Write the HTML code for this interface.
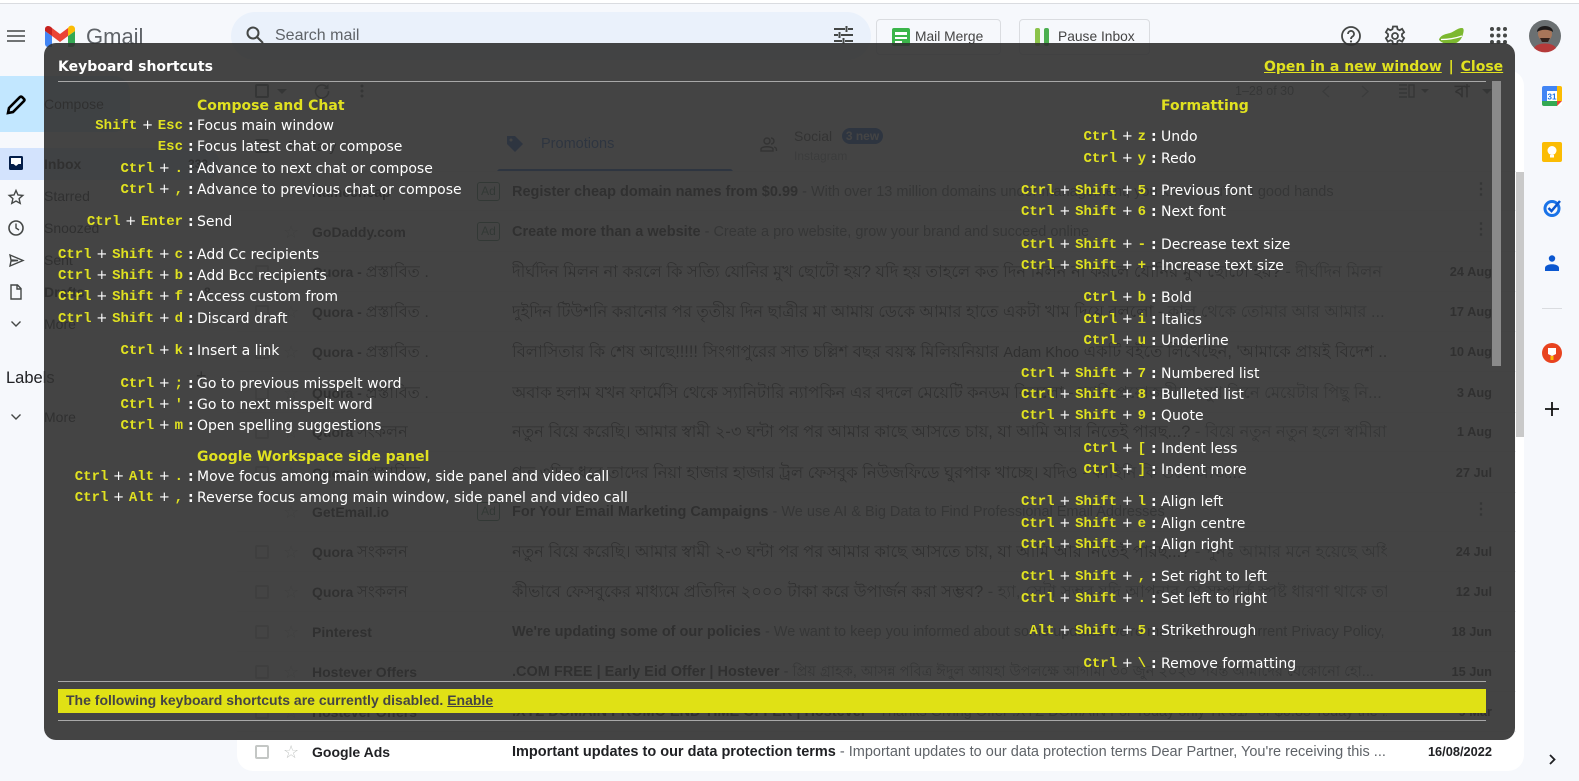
<!DOCTYPE html>
<html><head><meta charset="utf-8"><title>Gmail</title>
<style>
*{box-sizing:border-box}
html,body{margin:0;padding:0;width:1579px;height:781px;overflow:hidden;background:#f6f8fc;font-family:"Liberation Sans",sans-serif;color:#202124}
.a{position:absolute;white-space:nowrap}
svg{position:absolute;overflow:visible}
.side{font-size:14px;left:44px;line-height:20px;color:#202124}
.row{position:absolute;left:237px;width:1279px;height:40px;font-size:14px;line-height:40px;border-bottom:1px solid #eceff1;white-space:nowrap}
.row>*{position:absolute;top:0}
.cb{left:18px;top:13px!important;width:14px;height:14px;border:2px solid #c4c7c5;border-radius:2px}
.st{left:46px;top:10px!important;font-size:18px;line-height:20px;color:#c4c7c5}
.sn{left:75px;font-weight:bold;width:160px;overflow:hidden}
.q{font-size:16.200px;font-style:normal;font-weight:normal}
.ad{left:240px;top:10px!important;width:23px;height:19px;line-height:17px;border:1px solid #3c7a5c;border-radius:3px;font-size:12px;text-align:center;color:#3c7a5c}
.sb{left:275px;width:875px;overflow:hidden;color:#5f6368;font-size:14.500px}
.sb b{color:#202124}
.bn{font-size:16.400px}
.bn b{font-weight:normal}
.dt{right:24px;font-size:12.800px;font-weight:bold}
.ds{right:27px;font-weight:bold;color:#5f6368;font-size:16px;letter-spacing:0;line-height:36px}
#ov{position:absolute;left:44px;top:43px;width:1471px;height:697px;background:rgba(50,50,50,.91);border-radius:12px}
.r{position:absolute;left:0;height:20px;width:1500px;margin-top:1px;line-height:20px;font-family:"DejaVu Sans",sans-serif;font-size:14px;color:#fff;white-space:nowrap}
.k{position:absolute;left:0;text-align:right;font-family:"Liberation Mono",monospace;font-weight:bold;font-size:14px;color:#e0e120}
.k em{display:inline-block;width:20.500px;text-align:center;font-style:normal;font-family:"DejaVu Sans",sans-serif;font-weight:normal;font-size:13.300px;color:#fff}
.l .k{width:183px}.l .c{left:188px}.l .d{left:197px}
.m .k{width:1146px}.m .c{left:1151px}.m .d{left:1161px}
.c{position:absolute;font-weight:bold;color:#fff}
.d{position:absolute}
.h{position:absolute;margin-top:1px;color:#e0e120;font:bold 14px/20px "DejaVu Sans",sans-serif;white-space:nowrap}
.ln{position:absolute;height:1px;background:#a8a8a8}
</style></head><body>
<div class="a" style="left:0;top:0;width:1579px;height:4px;background:#fff;border-bottom:1px solid #dadce0"></div>

<!-- top bar -->
<svg style="left:7px;top:30px" width="18" height="12"><path d="M0 1h18M0 6h18M0 11h18" stroke="#444746" stroke-width="1.600"/></svg>
<svg style="left:45px;top:25px" width="30" height="22" viewBox="0 0 30 22"><path d="M0 6v13a3 3 0 0 0 3 3h4V11z" fill="#4285f4"/><path d="M23 22h4a3 3 0 0 0 3-3V6l-7 5z" fill="#34a853"/><path d="M23 3v8l7-5V4c0-3-3.500-4.500-6-2.500z" fill="#fbbc04"/><path d="M7 11V3l8 6 8-6v8l-8 6z" fill="#ea4335"/><path d="M0 4v2l7 5V3L6 2C3.500 0 0 1 0 4z" fill="#c5221f"/></svg>
<div class="a" style="left:86px;top:23px;font-size:22px;line-height:28px;color:#5f6368">Gmail</div>
<div class="a" style="left:231px;top:12px;width:640px;height:48px;border-radius:24px;background:#eaf1fb"></div>
<svg style="left:245px;top:25px" width="20" height="20" viewBox="0 0 20 20"><circle cx="8" cy="8" r="5.500" fill="none" stroke="#444746" stroke-width="2"/><path d="M12 12l6 6" stroke="#444746" stroke-width="2"/></svg>
<div class="a" style="left:275px;top:26px;font-size:16px;line-height:20px;color:#5f6368">Search mail</div>
<svg style="left:834px;top:26px" width="19" height="18"><path d="M0 3h11M14 3h5M0 9h4M7 9h12M0 15h8M11 15h8M12.500 0v6M5.500 6v6M9.500 12v6" stroke="#444746" stroke-width="2"/></svg>
<div class="a" style="left:876px;top:19px;width:125px;height:36px;border:1px solid #dadce0;border-radius:4px"></div>
<svg style="left:892px;top:28px" width="18" height="18"><rect width="18" height="18" rx="2" fill="#3bb54a"/><path d="M3 4h12v3H3zM3 9h12v2H3zM3 13h7v2H3z" fill="#fff"/></svg>
<div class="a" style="left:915px;top:28px;font-size:13.800px;line-height:18px;color:#444">Mail Merge</div>
<div class="a" style="left:1019px;top:19px;width:131px;height:36px;border:1px solid #dadce0;border-radius:4px"></div>
<svg style="left:1035px;top:28px" width="14" height="18"><rect width="5" height="18" rx="2" fill="#8bc34a"/><rect x="9" width="5" height="18" rx="2" fill="#4caf50"/></svg>
<div class="a" style="left:1058px;top:28px;font-size:13.800px;line-height:18px;color:#444">Pause Inbox</div>
<svg style="left:1341px;top:26px" width="20" height="20" viewBox="0 0 20 20"><circle cx="10" cy="10" r="9" fill="none" stroke="#444746" stroke-width="1.800"/><path d="M7 8a3 3 0 1 1 4.500 2.500c-1 .6-1.500 1.200-1.500 2.500" fill="none" stroke="#444746" stroke-width="1.800"/><circle cx="10" cy="15.500" r="1.100" fill="#444746"/></svg>
<svg style="left:1384px;top:25px" width="22" height="22" viewBox="0 0 22 22"><path d="M9 1.500h4l.6 2.800 2 .9 2.500-1.400 2 3.400-2.100 1.900v2.200l2.100 1.900-2 3.400-2.500-1.400-2 .9-.6 2.800H9l-.6-2.800-2-.9-2.500 1.400-2-3.400 2.100-1.900V9.100L1.900 7.200l2-3.400 2.500 1.400 2-.9z" fill="none" stroke="#444746" stroke-width="1.800"/><circle cx="11" cy="11" r="3" fill="none" stroke="#444746" stroke-width="1.800"/></svg>
<svg style="left:1439px;top:28px" width="25" height="18" viewBox="0 0 25 18"><path d="M0 12C1 7 7 6 11 5S18 0 23 0c2 0 2 3 1 6-1 5-5 10-11 10-6 1-10-1-13-4z" fill="#7cb82f"/><path d="M2 11.500c7 0 14-1 21-3.500" stroke="#fff" stroke-width="1.300" fill="none"/></svg>
<svg style="left:1490px;top:27px" width="17" height="17" fill="#444746"><circle cx="2" cy="2" r="2"/><circle cx="8.500" cy="2" r="2"/><circle cx="15" cy="2" r="2"/><circle cx="2" cy="8.500" r="2"/><circle cx="8.500" cy="8.500" r="2"/><circle cx="15" cy="8.500" r="2"/><circle cx="2" cy="15" r="2"/><circle cx="8.500" cy="15" r="2"/><circle cx="15" cy="15" r="2"/></svg>
<svg style="left:1529px;top:20px" width="32" height="32" viewBox="0 0 32 32"><circle cx="16" cy="16" r="16" fill="#6b7072"/><circle cx="16" cy="14" r="7" fill="#a8765a"/><path d="M8 12c0-8 16-8 16 0-4-3-12-3-16 0z" fill="#1d1a1a"/><path d="M11 18h10l-2 4h-6z" fill="#33221c"/><path d="M5 28c3-6 19-6 22 0a16 16 0 0 1-22 0z" fill="#b53a3a"/></svg>

<!-- sidebar -->
<div class="a" style="left:0;top:76px;width:130px;height:56px;background:#c2e7ff;border-radius:0 16px 16px 0"></div>
<svg style="left:6px;top:95px" width="20" height="20" viewBox="0 0 20 20"><path d="M2 18l1-5L14 2a1.500 1.500 0 0 1 2 0l2 2a1.500 1.500 0 0 1 0 2L7 17z" fill="none" stroke="#000" stroke-width="2.600"/></svg>
<div class="a side" style="top:94px">Compose</div>
<div class="a" style="left:0;top:148px;width:220px;height:32px;background:#d3e3fd;border-radius:0 16px 16px 0"></div>
<svg style="left:9px;top:156px" width="14" height="14"><rect width="14" height="14" rx="1.500" fill="#041e49"/><path d="M2 2h10v6H9.500L7 10 4.500 8H2z" fill="#fff"/></svg>
<div class="a side" style="top:154px;font-weight:bold">Inbox</div>
<div class="a side" style="left:188px;top:154px;font-size:12px;font-weight:bold">233</div>
<svg style="left:8px;top:189px" width="16" height="16" viewBox="0 0 16 16"><path d="M8 1.500l2 4.500 4.800.4-3.700 3.200 1.100 4.800L8 12l-4.200 2.400 1.100-4.800L1.200 6.400 6 6z" fill="none" stroke="#444746" stroke-width="1.400"/></svg>
<div class="a side" style="top:186px">Starred</div>
<svg style="left:8px;top:220px" width="16" height="16" viewBox="0 0 16 16"><circle cx="8" cy="8" r="7" fill="none" stroke="#444746" stroke-width="1.600"/><path d="M8 3.500V8l3 2" fill="none" stroke="#444746" stroke-width="1.400"/></svg>
<div class="a side" style="top:218px">Snoozed</div>
<svg style="left:9px;top:254px" width="15" height="13" viewBox="0 0 15 13"><path d="M1 1l13 5.500L1 12l1-5 7-.5-7-.5z" fill="none" stroke="#444746" stroke-width="1.400"/></svg>
<div class="a side" style="top:250px">Sent</div>
<svg style="left:10px;top:284px" width="12" height="16" viewBox="0 0 12 16"><path d="M1 1h6.500L11 4.500V15H1zM7 1v4h4" fill="none" stroke="#444746" stroke-width="1.400"/></svg>
<div class="a side" style="top:282px;font-weight:bold">Drafts</div>
<div class="a side" style="left:204px;top:282px;font-size:12px;font-weight:bold">8</div>
<svg style="left:11px;top:321px" width="10" height="6"><path d="M.5.500L5 5 9.500.500" fill="none" stroke="#444746" stroke-width="1.400"/></svg>
<div class="a side" style="top:314px">More</div>
<div class="a" style="left:6px;top:368px;font-size:16.500px;line-height:20px;color:#202124">Labels</div>
<div class="a side" style="left:196px;top:366px;font-size:18px">+</div>
<svg style="left:11px;top:414px" width="10" height="6"><path d="M.5.500L5 5 9.500.500" fill="none" stroke="#444746" stroke-width="1.400"/></svg>
<div class="a side" style="top:407px">More</div>

<!-- main panel -->
<div class="a" style="left:237px;top:70px;width:1287px;height:701px;background:#fff;border-radius:16px"></div>
<div class="a" style="left:255px;top:84px;width:14px;height:14px;border:2px solid #5f6368;border-radius:2px"></div>
<svg style="left:277px;top:89px" width="10" height="5"><path d="M0 0h10L5 5z" fill="#5f6368"/></svg>
<svg style="left:314px;top:83px" width="16" height="16" viewBox="0 0 16 16"><path d="M13.500 5A6.500 6.500 0 1 0 14.500 8" fill="none" stroke="#5f6368" stroke-width="1.600"/><path d="M14.500 1v5h-5z" fill="#5f6368"/></svg>
<svg style="left:360px;top:84px" width="4" height="14" fill="#5f6368"><circle cx="2" cy="2" r="1.500"/><circle cx="2" cy="7" r="1.500"/><circle cx="2" cy="12" r="1.500"/></svg>
<div class="a" style="left:1235px;top:83px;font-size:12.500px;line-height:16px;color:#5f6368">1–28 of 30</div>
<svg style="left:1322px;top:85px" width="8" height="13"><path d="M7 1L1 6.500 7 12" fill="none" stroke="#9aa0a6" stroke-width="1.400"/></svg>
<svg style="left:1361px;top:85px" width="8" height="13"><path d="M1 1l6 5.500L1 12" fill="none" stroke="#9aa0a6" stroke-width="1.400"/></svg>
<svg style="left:1399px;top:84px" width="30" height="14"><path d="M0 1h8M0 5h8M0 9h8M0 13h8M10 1h5v12h-5z" fill="none" stroke="#5f6368" stroke-width="1.400"/><path d="M22 5h8l-4 4z" fill="#5f6368"/></svg>
<div class="a" style="left:1455px;top:81px;font:bold 17px/22px 'Liberation Sans','DejaVu Sans',sans-serif;color:#444">বা</div>
<svg style="left:1482px;top:89px" width="10" height="5"><path d="M0 0h10L5 5z" fill="#5f6368"/></svg>

<div class="a" style="left:255px;top:139px;width:14px;height:14px;border:2px solid #5f6368;border-radius:2px"></div>
<div class="a" style="left:288px;top:136px;font-size:14px;line-height:20px">Primary</div>
<svg style="left:506px;top:135px" width="18" height="18" viewBox="0 0 18 18"><path d="M1 1h8l8 8-8 8-8-8z" fill="#0b57d0"/><circle cx="5" cy="5" r="1.500" fill="#fff"/></svg>
<div class="a" style="left:541px;top:134px;font-size:14.500px;line-height:20px;color:#0b57d0">Promotions</div>
<div class="a" style="left:497px;top:169px;width:236px;height:3px;background:#0b57d0;border-radius:3px 3px 0 0"></div>
<svg style="left:760px;top:137px" width="17" height="15" viewBox="0 0 17 15"><circle cx="7" cy="4" r="3" fill="none" stroke="#444746" stroke-width="1.400"/><path d="M1 14v-2c0-3 12-3 12 0v2zM11 1a3 3 0 0 1 0 6M14 10c2 .5 2.500 1 2.500 4" fill="none" stroke="#444746" stroke-width="1.400"/></svg>
<div class="a" style="left:794px;top:126px;font-size:14px;line-height:20px;color:#444">Social</div>
<div class="a" style="left:842px;top:128px;width:41px;height:16px;border-radius:8px;background:#0b57d0;color:#fff;font:bold 12px/16px 'Liberation Sans',sans-serif;text-align:center">3 new</div>
<div class="a" style="left:794px;top:147px;font-size:12px;line-height:18px;color:#9aa0a6">Instagram</div>

<div class="row" style="top:171px;border-top:1px solid #eceff1"><i class="st" style="font-style:normal">☆</i><span class="sn">Namecheap</span><span class="ad">Ad</span><span class="sb"><b>Register cheap domain names from $0.99</b> - With over 13 million domains under management, you know you're in good hands</span><span class="ds">⋮</span></div>
<div class="row" style="top:212px"><i class="st" style="font-style:normal">☆</i><span class="sn">GoDaddy.com</span><span class="ad">Ad</span><span class="sb"><b>Create more than a website</b> - Create a pro website, grow your brand and succeed online</span><span class="ds">⋮</span></div>
<div class="row" style="top:252px"><i class="cb"></i><i class="st" style="font-style:normal">☆</i><span class="sn">Quora - <i class="q">প্রস্তাবিত .</i></span><span class="sb bn"><b>দীর্ঘদিন মিলন না করলে কি সত্যি যোনির মুখ ছোটো হয়? যদি হয় তাহলে কত দিন মিলন না করলে যোনির মুখ ছোটো হয়?</b> - দীর্ঘদিন মিলন ...</span><span class="dt">24 Aug</span></div>
<div class="row" style="top:292px"><i class="cb"></i><i class="st" style="font-style:normal">☆</i><span class="sn">Quora - <i class="q">প্রস্তাবিত .</i></span><span class="sb bn"><b>দুইদিন টিউশনি করানোর পর তৃতীয় দিন ছাত্রীর মা আমায় ডেকে আমার হাতে একটা খাম দিয়ে বললো</b> - কাল থেকে তোমার আর আমার ...</span><span class="dt">17 Aug</span></div>
<div class="row" style="top:332px"><i class="cb"></i><i class="st" style="font-style:normal">☆</i><span class="sn">Quora - <i class="q">প্রস্তাবিত .</i></span><span class="sb bn"><b>বিলাসিতার কি শেষ আছে!!!!! সিংগাপুরের সাত চল্লিশ বছর বয়স্ক মিলিয়নিয়ার <span style="font-size:14.500px">Adam Khoo</span> একটি বইতে লিখেছেন, 'আমাকে প্রায়ই বিদেশ ...</b></span><span class="dt">10 Aug</span></div>
<div class="row" style="top:373px"><i class="cb"></i><i class="st" style="font-style:normal">☆</i><span class="sn">Quora - <i class="q">প্রস্তাবিত .</i></span><span class="sb bn"><b>অবাক হলাম যখন ফার্মেসি থেকে স্যানিটারি ন্যাপকিন এর বদলে মেয়েটি কনডম কিনলো</b> - আমি প্রয়োজনীয় ওষুধ কিনে মেয়েটার পিছু নি...</span><span class="dt">3 Aug</span></div>
<div class="row" style="top:412px"><i class="cb"></i><i class="st" style="font-style:normal">☆</i><span class="sn">Quora <i class="q">সংকলন</i></span><span class="sb bn"><b>নতুন বিয়ে করেছি। আমার স্বামী ২-৩ ঘন্টা পর পর আমার কাছে আসতে চায়, যা আমি আর নিতেই পারছ...?</b> - বিয়ে নতুন নতুন হলে স্বামীরা ...</span><span class="dt">1 Aug</span></div>
<div class="row" style="top:453px"><i class="cb"></i><i class="st" style="font-style:normal">☆</i><span class="sn">Quora - <i class="q">প্রস্তাবিত .</i></span><span class="sb bn"><b>গত ৩দিন ধরে তাদের নিয়া হাজার হাজার ট্রল ফেসবুক নিউজফিডে ঘুরপাক খাচ্ছে। যদিও</b> - কাহিনি কি তবে আজ...</span><span class="dt">27 Jul</span></div>
<div class="row" style="top:492px"><i class="st" style="font-style:normal">☆</i><span class="sn">GetEmail.io</span><span class="ad">Ad</span><span class="sb"><b>For Your Email Marketing Campaigns</b> - We use AI &amp; Big Data to Find Professional Email Addresses</span><span class="ds">⋮</span></div>
<div class="row" style="top:532px"><i class="cb"></i><i class="st" style="font-style:normal">☆</i><span class="sn">Quora <i class="q">সংকলন</i></span><span class="sb bn"><b>নতুন বিয়ে করেছি। আমার স্বামী ২-৩ ঘন্টা পর পর আমার কাছে আসতে চায়, যা আমি আর নিতেই পারছ...?</b> - পুনঃ আমার মনে হয়েছে অধি...</span><span class="dt">24 Jul</span></div>
<div class="row" style="top:572px"><i class="cb"></i><i class="st" style="font-style:normal">☆</i><span class="sn">Quora <i class="q">সংকলন</i></span><span class="sb bn"><b>কীভাবে ফেসবুকের মাধ্যমে প্রতিদিন ২০০০ টাকা করে উপার্জন করা সম্ভব?</b> - হ্যা, সেটা সম্ভব যদি আপনার সে সম্পর্কে স্পষ্ট ধারণা থাকে তাহলে। ...</span><span class="dt">12 Jul</span></div>
<div class="row" style="top:612px"><i class="cb"></i><i class="st" style="font-style:normal">☆</i><span class="sn">Pinterest</span><span class="sb"><b>We're updating some of our policies</b> - We want to keep you informed about some updates we're making to our Current Privacy Policy, Te...</span><span class="dt">18 Jun</span></div>
<div class="row" style="top:652px"><i class="cb"></i><i class="st" style="font-style:normal">☆</i><span class="sn">Hostever Offers</span><span class="sb"><b>.COM FREE | Early Eid Offer | Hostever</b> - প্রিয় গ্রাহক, আসন্ন পবিত্র ঈদুল আযহা উপলক্ষে আগামী ৩০ জুন ২০২৩ পর্যন্ত আমাদের যেকোনো হো...</span><span class="dt">15 Jun</span></div>
<div class="row" style="top:692px"><i class="cb"></i><i class="st" style="font-style:normal">☆</i><span class="sn">Hostever Offers</span><span class="sb"><b>.XYZ DOMAIN PROMO END TIME OFFER | Hostever</b> - Thanks Giving Offer .XYZ DOMAIN For Today only Tk 81/- or $0.85 Today the .XYZ ...</span><span class="dt">9 Mar</span></div>
<div class="row" style="top:732px;border-bottom:0"><i class="cb"></i><i class="st" style="font-style:normal">☆</i><span class="sn">Google Ads</span><span class="sb"><b>Important updates to our data protection terms</b> - Important updates to our data protection terms Dear Partner, You're receiving this ...</span><span class="dt">16/08/2022</span></div>
<div class="a" style="left:1516px;top:172px;width:8px;height:265px;background:#c9c9c9"></div>

<!-- right rail -->
<svg style="left:1542px;top:86px" width="20" height="20" viewBox="0 0 20 20"><rect width="20" height="20" rx="2" fill="#fff"/><path d="M0 2a2 2 0 0 1 2-2h13v5H5v10H0z" fill="#4285f4"/><path d="M15 0h3a2 2 0 0 1 2 2v13h-5z" fill="#fbbc04"/><path d="M0 15h15v5H2a2 2 0 0 1-2-2z" fill="#34a853"/><path d="M15 15h5l-5 5z" fill="#ea4335"/><text x="10" y="13.500" font-size="8" font-weight="bold" text-anchor="middle" fill="#1a73e8" font-family="Liberation Sans">31</text></svg>
<svg style="left:1542px;top:142px" width="20" height="20" viewBox="0 0 20 20"><rect width="20" height="20" rx="2" fill="#fbbc04"/><circle cx="10" cy="8.500" r="4.500" fill="#fff"/><rect x="8" y="13" width="4" height="2.500" fill="#fff"/></svg>
<svg style="left:1543px;top:199px" width="19" height="18" viewBox="0 0 19 18"><circle cx="9" cy="9.500" r="7" fill="none" stroke="#1a73e8" stroke-width="3"/><path d="M5.500 9l3 3L17 2" fill="none" stroke="#0b57d0" stroke-width="2.500"/></svg>
<svg style="left:1545px;top:255px" width="14" height="17" viewBox="0 0 14 17" fill="#0b57d0"><circle cx="7" cy="3.500" r="3.200"/><path d="M0 16v-3c0-5 14-5 14 0v3z"/></svg>
<div class="a" style="left:1542px;top:308px;width:20px;height:1px;background:#dadce0"></div>
<svg style="left:1542px;top:343px" width="20" height="20" viewBox="0 0 20 20"><circle cx="10" cy="10" r="10" fill="#e8431f"/><path d="M6 5h8v6l-4 2-4-2z" fill="#fff"/><rect x="8.500" y="13" width="3" height="4" fill="#fbbc04"/></svg>
<svg style="left:1545px;top:402px" width="14" height="14"><path d="M7 0v14M0 7h14" stroke="#111" stroke-width="1.800"/></svg>
<svg style="left:1549px;top:754px" width="7" height="11"><path d="M1 1l4.500 4.500L1 10" fill="none" stroke="#202124" stroke-width="1.800"/></svg>

<!-- overlay -->
<div id="ov"></div>
<div class="h" style="left:58px;top:56px;color:#fff">Keyboard shortcuts</div>
<div class="h" style="left:1264px;top:56px"><u>Open in a new window</u><span style="margin:0 2px"> | </span><u>Close</u></div>
<div class="ln" style="left:58px;top:81px;width:1428px"></div>
<div class="a" style="left:1492px;top:81px;width:9px;height:285px;background:#8a8a8a"></div>

<div class="h" style="left:197px;top:95px">Compose and Chat</div>
<div class="r l" style="top:115px"><span class="k">Shift<em>+</em>Esc</span><span class="c">:</span><span class="d">Focus main window</span></div>
<div class="r l" style="top:136px"><span class="k">Esc</span><span class="c">:</span><span class="d">Focus latest chat or compose</span></div>
<div class="r l" style="top:158px"><span class="k">Ctrl<em>+</em>.</span><span class="c">:</span><span class="d">Advance to next chat or compose</span></div>
<div class="r l" style="top:179px"><span class="k">Ctrl<em>+</em>,</span><span class="c">:</span><span class="d">Advance to previous chat or compose</span></div>
<div class="r l" style="top:211px"><span class="k">Ctrl<em>+</em>Enter</span><span class="c">:</span><span class="d">Send</span></div>
<div class="r l" style="top:244px"><span class="k">Ctrl<em>+</em>Shift<em>+</em>c</span><span class="c">:</span><span class="d">Add Cc recipients</span></div>
<div class="r l" style="top:265px"><span class="k">Ctrl<em>+</em>Shift<em>+</em>b</span><span class="c">:</span><span class="d">Add Bcc recipients</span></div>
<div class="r l" style="top:286px"><span class="k">Ctrl<em>+</em>Shift<em>+</em>f</span><span class="c">:</span><span class="d">Access custom from</span></div>
<div class="r l" style="top:308px"><span class="k">Ctrl<em>+</em>Shift<em>+</em>d</span><span class="c">:</span><span class="d">Discard draft</span></div>
<div class="r l" style="top:340px"><span class="k">Ctrl<em>+</em>k</span><span class="c">:</span><span class="d">Insert a link</span></div>
<div class="r l" style="top:373px"><span class="k">Ctrl<em>+</em>;</span><span class="c">:</span><span class="d">Go to previous misspelt word</span></div>
<div class="r l" style="top:394px"><span class="k">Ctrl<em>+</em>'</span><span class="c">:</span><span class="d">Go to next misspelt word</span></div>
<div class="r l" style="top:415px"><span class="k">Ctrl<em>+</em>m</span><span class="c">:</span><span class="d">Open spelling suggestions</span></div>
<div class="h" style="left:197px;top:446px">Google Workspace side panel</div>
<div class="r l" style="top:466px"><span class="k">Ctrl<em>+</em>Alt<em>+</em>.</span><span class="c">:</span><span class="d">Move focus among main window, side panel and video call</span></div>
<div class="r l" style="top:487px"><span class="k">Ctrl<em>+</em>Alt<em>+</em>,</span><span class="c">:</span><span class="d">Reverse focus among main window, side panel and video call</span></div>

<div class="h" style="left:1161px;top:95px">Formatting</div>
<div class="r m" style="top:126px"><span class="k">Ctrl<em>+</em>z</span><span class="c">:</span><span class="d">Undo</span></div>
<div class="r m" style="top:148px"><span class="k">Ctrl<em>+</em>y</span><span class="c">:</span><span class="d">Redo</span></div>
<div class="r m" style="top:180px"><span class="k">Ctrl<em>+</em>Shift<em>+</em>5</span><span class="c">:</span><span class="d">Previous font</span></div>
<div class="r m" style="top:201px"><span class="k">Ctrl<em>+</em>Shift<em>+</em>6</span><span class="c">:</span><span class="d">Next font</span></div>
<div class="r m" style="top:234px"><span class="k">Ctrl<em>+</em>Shift<em>+</em>-</span><span class="c">:</span><span class="d">Decrease text size</span></div>
<div class="r m" style="top:255px"><span class="k">Ctrl<em>+</em>Shift<em>+</em>+</span><span class="c">:</span><span class="d">Increase text size</span></div>
<div class="r m" style="top:287px"><span class="k">Ctrl<em>+</em>b</span><span class="c">:</span><span class="d">Bold</span></div>
<div class="r m" style="top:309px"><span class="k">Ctrl<em>+</em>i</span><span class="c">:</span><span class="d">Italics</span></div>
<div class="r m" style="top:330px"><span class="k">Ctrl<em>+</em>u</span><span class="c">:</span><span class="d">Underline</span></div>
<div class="r m" style="top:363px"><span class="k">Ctrl<em>+</em>Shift<em>+</em>7</span><span class="c">:</span><span class="d">Numbered list</span></div>
<div class="r m" style="top:384px"><span class="k">Ctrl<em>+</em>Shift<em>+</em>8</span><span class="c">:</span><span class="d">Bulleted list</span></div>
<div class="r m" style="top:405px"><span class="k">Ctrl<em>+</em>Shift<em>+</em>9</span><span class="c">:</span><span class="d">Quote</span></div>
<div class="r m" style="top:438px"><span class="k">Ctrl<em>+</em>[</span><span class="c">:</span><span class="d">Indent less</span></div>
<div class="r m" style="top:459px"><span class="k">Ctrl<em>+</em>]</span><span class="c">:</span><span class="d">Indent more</span></div>
<div class="r m" style="top:491px"><span class="k">Ctrl<em>+</em>Shift<em>+</em>l</span><span class="c">:</span><span class="d">Align left</span></div>
<div class="r m" style="top:513px"><span class="k">Ctrl<em>+</em>Shift<em>+</em>e</span><span class="c">:</span><span class="d">Align centre</span></div>
<div class="r m" style="top:534px"><span class="k">Ctrl<em>+</em>Shift<em>+</em>r</span><span class="c">:</span><span class="d">Align right</span></div>
<div class="r m" style="top:566px"><span class="k">Ctrl<em>+</em>Shift<em>+</em>,</span><span class="c">:</span><span class="d">Set right to left</span></div>
<div class="r m" style="top:588px"><span class="k">Ctrl<em>+</em>Shift<em>+</em>.</span><span class="c">:</span><span class="d">Set left to right</span></div>
<div class="r m" style="top:620px"><span class="k">Alt<em>+</em>Shift<em>+</em>5</span><span class="c">:</span><span class="d">Strikethrough</span></div>
<div class="r m" style="top:653px"><span class="k">Ctrl<em>+</em>\</span><span class="c">:</span><span class="d">Remove formatting</span></div>

<div class="ln" style="left:58px;top:681px;width:1428px"></div>
<div class="a" style="left:58px;top:689px;width:1428px;height:24px;background:rgba(231,232,20,.96);padding-left:8px;font:bold 14px/23px 'Liberation Sans',sans-serif;color:#444">The following keyboard shortcuts are currently disabled. <u>Enable</u></div>
<div class="ln" style="left:58px;top:720px;width:1428px"></div>
</body></html>
